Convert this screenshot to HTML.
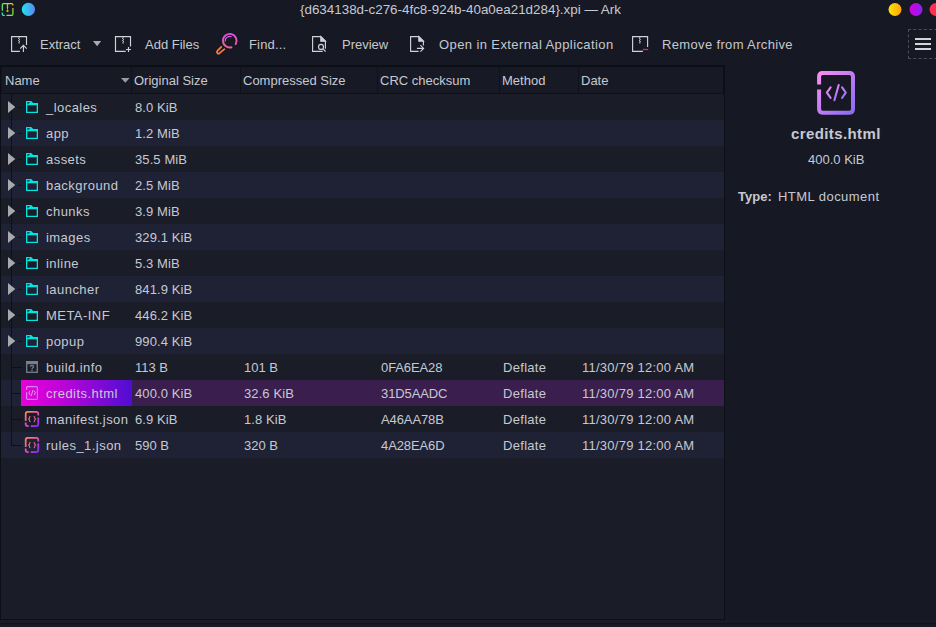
<!DOCTYPE html>
<html><head><meta charset="utf-8">
<style>
*{margin:0;padding:0;box-sizing:border-box}
html,body{width:936px;height:627px;overflow:hidden;background:#161923;font-family:"Liberation Sans",sans-serif;font-size:13px;color:#c6c9d2}
.a{position:absolute;white-space:pre;line-height:16px}
#tbl{position:absolute;left:0;top:65px;width:725px;height:555px;background:#1a1d28;border:1px solid #0d0f16}
.hdr{position:absolute;left:0;top:0;width:723px;height:28px;background:#171a25;border-bottom:1px solid #0e1016}
.hs{position:absolute;top:0;width:1px;height:27px;background:#10121a}
.hdr .a{top:7px}
.tb{top:37px;color:#c5c8d0}
.tri{z-index:3}
.row{position:absolute;left:0;width:723px;height:26px}
.row.l{background:#1f2234}
.row .a{top:6px}
svg{position:absolute;overflow:visible}
</style></head><body>
<!-- title bar -->
<div class="a" style="left:300px;top:2px;font-size:13.4px;color:#c6c9d2">{d634138d-c276-4fc8-924b-40a0ea21d284}.xpi — Ark</div>
<svg style="left:0;top:0" width="20" height="20" fill="none" stroke-width="1.2">
 <defs><linearGradient id="gz" x1="1" y1="0" x2="0" y2="1"><stop offset="0" stop-color="#f8c030"/><stop offset="0.5" stop-color="#70f040"/><stop offset="1" stop-color="#50e0d0"/></linearGradient></defs>
 <path d="M2.3 10.7V4.8Q2.3 3.6 3.5 3.6H11.7Q12.9 3.6 12.9 4.8V5.5M12.9 8.1V14.2Q12.9 15.4 11.7 15.4H6.4M4.7 15.4H3.5Q2.3 15.4 2.3 14.2V12.4" stroke="url(#gz)"/>
 <path d="M7.5 3.6V9.6M6.7 5.3L7.5 5.9L8.3 5.3M6.7 7.3L7.5 7.9L8.3 7.3" stroke="#6cf050" stroke-width="0.9"/>
 <circle cx="7.5" cy="11" r="1.15" fill="#d0a420"/>
</svg>
<svg style="left:21px;top:3px" width="16" height="16"><defs><linearGradient id="gb" x1="0" x2="1"><stop offset="0" stop-color="#20e4f0"/><stop offset="1" stop-color="#5a88f4"/></linearGradient></defs><circle cx="7.4" cy="6.4" r="6.6" fill="url(#gb)"/></svg>
<svg style="left:887.5px;top:3px" width="14" height="14"><defs><linearGradient id="gy" x1="0" x2="1"><stop offset="0" stop-color="#ffe600"/><stop offset="1" stop-color="#ffa010"/></linearGradient></defs><circle cx="7" cy="6.5" r="6.5" fill="url(#gy)"/></svg>
<svg style="left:908.5px;top:3px" width="14" height="14"><defs><linearGradient id="gp" x1="0" x2="1"><stop offset="0" stop-color="#d400e0"/><stop offset="1" stop-color="#8a20f0"/></linearGradient></defs><circle cx="7" cy="6.5" r="6.5" fill="url(#gp)"/></svg>
<svg style="left:929px;top:3px" width="14" height="14"><circle cx="7" cy="6.5" r="6.5" fill="#ff3050"/></svg>

<!-- toolbar -->
<div id="toolbar">
<svg style="left:8px;top:33px" width="22" height="22" fill="none" stroke="#cfd1d8" stroke-width="1.15">
 <path d="M11.9 18.3H3.6V3.6H18.5V11.9"/><path d="M15.4 19V12.6M12.2 15.6L15.4 12.4L18.7 15.6"/>
 <path d="M11.2 3.6V4.8L10.4 5.4L11.8 6.4L10.4 7.4L11.8 8.4L10.6 9" stroke-width="1"/><path d="M10.2 9.5H12.1A0.95 1.1 0 0 1 10.2 9.5Z" fill="#cfd1d8" stroke="none"/>
</svg>
<div class="a tb" style="left:40px">Extract</div>
<svg style="left:93px;top:41px" width="9" height="6"><path d="M0 0H8.2L4.1 5.2Z" fill="#a8aab2"/></svg>
<svg style="left:112px;top:33px" width="22" height="22" fill="none" stroke="#cfd1d8" stroke-width="1.15">
 <path d="M13.7 18.3H3.5V3.6H18.5V13.5"/><path d="M16.5 14V19M14 16.5H19"/>
 <path d="M11.2 3.6V4.8L10.4 5.4L11.8 6.4L10.4 7.4L11.8 8.4L10.6 9" stroke-width="1"/><path d="M10.2 9.5H12.1A0.95 1.1 0 0 1 10.2 9.5Z" fill="#cfd1d8" stroke="none"/>
</svg>
<div class="a tb" style="left:145px">Add Files</div>
<svg style="left:212px;top:28px" width="30" height="30" fill="none" stroke-width="1.9" stroke-linecap="round">
 <defs><linearGradient id="gf" x1="0" y1="0" x2="0" y2="1"><stop offset="0" stop-color="#e050e0"/><stop offset="1" stop-color="#f0609a"/></linearGradient></defs>
 <path d="M19.5 19.3A6.8 6.8 0 1 1 23.7 16.1" stroke="url(#gf)"/>
 <path d="M13.2 12.9A4.5 4.5 0 0 1 19.2 8.7" stroke="#dc58dc" stroke-width="1.2"/>
 <path d="M9.3 18.9L5.4 22.9A1.5 1.5 0 0 0 7.6 25.1L12.4 21.2" stroke="#ff7e3a" stroke-width="1.7"/>
</svg>
<div class="a tb" style="left:249px;letter-spacing:0.15px">Find...</div>
<svg style="left:308px;top:33px" width="22" height="22" fill="none" stroke="#cfd1d8" stroke-width="1.15">
 <path d="M14.7 18.3H4.6V3.6H12.8L17.4 8.2V15.8"/><path d="M12.8 3.6V8.2H17.4Z" fill="#cfd1d8"/>
 <circle cx="13" cy="13.9" r="2.5"/><path d="M14.9 15.9L17.6 18.5"/>
</svg>
<div class="a tb" style="left:342px">Preview</div>
<svg style="left:406px;top:33px" width="22" height="22" fill="none" stroke="#cfd1d8" stroke-width="1.15">
 <path d="M12.6 18.3H4.6V3.6H12.8L17.4 8.2V12.6"/><path d="M12.8 3.6V8.2H17.4Z" fill="#cfd1d8"/>
 <path d="M10.9 15.4H17.5M14.4 12.2L17.6 15.4L14.4 18.6"/>
</svg>
<div class="a tb" style="left:439px;letter-spacing:0.4px">Open in External Application</div>
<svg style="left:628px;top:33px" width="22" height="22" fill="none" stroke="#cfd1d8" stroke-width="1.15">
 <path d="M14.9 18.3H4.6V3.6H19.6V13.9"/><path d="M14.9 16.5H20.2" stroke="#f0204c" stroke-width="1.3"/>
 <path d="M11.9 3.6V4.8L11.1 5.4L12.5 6.4L11.1 7.4L12.5 8.4L11.3 9" stroke-width="1"/><path d="M10.9 9.5H12.8A0.95 1.1 0 0 1 10.9 9.5Z" fill="#cfd1d8" stroke="none"/>
</svg>
<div class="a tb" style="left:662px;letter-spacing:0.35px">Remove from Archive</div>
<div style="position:absolute;left:908px;top:29px;width:40px;height:30px;border:1px dashed #4a4d58"></div>
<div style="position:absolute;left:915px;top:38px;width:16px;height:2px;background:#d2d4dc"></div>
<div style="position:absolute;left:915px;top:43px;width:16px;height:2px;background:#d2d4dc"></div>
<div style="position:absolute;left:915px;top:48px;width:16px;height:2px;background:#d2d4dc"></div>
</div>

<!-- table -->
<div id="tbl">
 <div class="hdr">
  <div style="position:absolute;left:0;top:0;width:723px;height:1px;background:#0d0f16"></div>
  <div style="position:absolute;left:722px;top:0;width:1px;height:28px;background:#0d0f16"></div>
  <div style="position:absolute;left:0;top:0;width:1px;height:28px;background:#12141c"></div>
  <div class="a" style="left:4px;">Name</div>
  <svg style="left:120px;top:12px" width="10" height="6"><path d="M0 0H8.6L4.3 4.8Z" fill="#9a9ca4"/></svg>
  <div class="hs" style="left:130px"></div>
  <div class="a" style="left:133px;">Original Size</div>
  <div class="hs" style="left:239px"></div>
  <div class="a" style="left:242px;">Compressed Size</div>
  <div class="hs" style="left:376px"></div>
  <div class="a" style="left:379px;">CRC checksum</div>
  <div class="hs" style="left:498px"></div>
  <div class="a" style="left:501px;">Method</div>
  <div class="hs" style="left:577px"></div>
  <div class="a" style="left:580px;">Date</div>
 </div>
 <div class="row" style="top:28px"><svg style="left:7px;top:7px;z-index:3" width="8" height="12"><path d="M0 0L7.3 6L0 12Z" fill="#a9a9ad"/></svg><div style="position:absolute;left:17px;top:13px;width:4px;height:1px;background:#10121a"></div><svg style="left:25px;top:7px" width="12" height="12" viewBox="0 0 12 12"><path d="M0 0H5.2L7.2 2H12V4.3H0Z" fill="#00e5e0"/><path d="M1.3 1.3H4.2L1.3 3.6Z" fill="#1b1e2a"/><path d="M0.65 2.5V11.35H11.35V2.5" fill="none" stroke="#00e5e0" stroke-width="1.3"/></svg><div class="a" style="left:45px;letter-spacing:0.45px">_locales</div><div class="a" style="left:134px;letter-spacing:0.1px">8.0 KiB</div></div>
<div class="row l" style="top:54px"><svg style="left:7px;top:7px;z-index:3" width="8" height="12"><path d="M0 0L7.3 6L0 12Z" fill="#a9a9ad"/></svg><div style="position:absolute;left:17px;top:13px;width:4px;height:1px;background:#10121a"></div><svg style="left:25px;top:7px" width="12" height="12" viewBox="0 0 12 12"><path d="M0 0H5.2L7.2 2H12V4.3H0Z" fill="#00e5e0"/><path d="M1.3 1.3H4.2L1.3 3.6Z" fill="#1b1e2a"/><path d="M0.65 2.5V11.35H11.35V2.5" fill="none" stroke="#00e5e0" stroke-width="1.3"/></svg><div class="a" style="left:45px;letter-spacing:0.45px">app</div><div class="a" style="left:134px;letter-spacing:0.1px">1.2 MiB</div></div>
<div class="row" style="top:80px"><svg style="left:7px;top:7px;z-index:3" width="8" height="12"><path d="M0 0L7.3 6L0 12Z" fill="#a9a9ad"/></svg><div style="position:absolute;left:17px;top:13px;width:4px;height:1px;background:#10121a"></div><svg style="left:25px;top:7px" width="12" height="12" viewBox="0 0 12 12"><path d="M0 0H5.2L7.2 2H12V4.3H0Z" fill="#00e5e0"/><path d="M1.3 1.3H4.2L1.3 3.6Z" fill="#1b1e2a"/><path d="M0.65 2.5V11.35H11.35V2.5" fill="none" stroke="#00e5e0" stroke-width="1.3"/></svg><div class="a" style="left:45px;letter-spacing:0.45px">assets</div><div class="a" style="left:134px;letter-spacing:0.1px">35.5 MiB</div></div>
<div class="row l" style="top:106px"><svg style="left:7px;top:7px;z-index:3" width="8" height="12"><path d="M0 0L7.3 6L0 12Z" fill="#a9a9ad"/></svg><div style="position:absolute;left:17px;top:13px;width:4px;height:1px;background:#10121a"></div><svg style="left:25px;top:7px" width="12" height="12" viewBox="0 0 12 12"><path d="M0 0H5.2L7.2 2H12V4.3H0Z" fill="#00e5e0"/><path d="M1.3 1.3H4.2L1.3 3.6Z" fill="#1b1e2a"/><path d="M0.65 2.5V11.35H11.35V2.5" fill="none" stroke="#00e5e0" stroke-width="1.3"/></svg><div class="a" style="left:45px;letter-spacing:0.45px">background</div><div class="a" style="left:134px;letter-spacing:0.1px">2.5 MiB</div></div>
<div class="row" style="top:132px"><svg style="left:7px;top:7px;z-index:3" width="8" height="12"><path d="M0 0L7.3 6L0 12Z" fill="#a9a9ad"/></svg><div style="position:absolute;left:17px;top:13px;width:4px;height:1px;background:#10121a"></div><svg style="left:25px;top:7px" width="12" height="12" viewBox="0 0 12 12"><path d="M0 0H5.2L7.2 2H12V4.3H0Z" fill="#00e5e0"/><path d="M1.3 1.3H4.2L1.3 3.6Z" fill="#1b1e2a"/><path d="M0.65 2.5V11.35H11.35V2.5" fill="none" stroke="#00e5e0" stroke-width="1.3"/></svg><div class="a" style="left:45px;letter-spacing:0.45px">chunks</div><div class="a" style="left:134px;letter-spacing:0.1px">3.9 MiB</div></div>
<div class="row l" style="top:158px"><svg style="left:7px;top:7px;z-index:3" width="8" height="12"><path d="M0 0L7.3 6L0 12Z" fill="#a9a9ad"/></svg><div style="position:absolute;left:17px;top:13px;width:4px;height:1px;background:#10121a"></div><svg style="left:25px;top:7px" width="12" height="12" viewBox="0 0 12 12"><path d="M0 0H5.2L7.2 2H12V4.3H0Z" fill="#00e5e0"/><path d="M1.3 1.3H4.2L1.3 3.6Z" fill="#1b1e2a"/><path d="M0.65 2.5V11.35H11.35V2.5" fill="none" stroke="#00e5e0" stroke-width="1.3"/></svg><div class="a" style="left:45px;letter-spacing:0.45px">images</div><div class="a" style="left:134px;letter-spacing:0.1px">329.1 KiB</div></div>
<div class="row" style="top:184px"><svg style="left:7px;top:7px;z-index:3" width="8" height="12"><path d="M0 0L7.3 6L0 12Z" fill="#a9a9ad"/></svg><div style="position:absolute;left:17px;top:13px;width:4px;height:1px;background:#10121a"></div><svg style="left:25px;top:7px" width="12" height="12" viewBox="0 0 12 12"><path d="M0 0H5.2L7.2 2H12V4.3H0Z" fill="#00e5e0"/><path d="M1.3 1.3H4.2L1.3 3.6Z" fill="#1b1e2a"/><path d="M0.65 2.5V11.35H11.35V2.5" fill="none" stroke="#00e5e0" stroke-width="1.3"/></svg><div class="a" style="left:45px;letter-spacing:0.45px">inline</div><div class="a" style="left:134px;letter-spacing:0.1px">5.3 MiB</div></div>
<div class="row l" style="top:210px"><svg style="left:7px;top:7px;z-index:3" width="8" height="12"><path d="M0 0L7.3 6L0 12Z" fill="#a9a9ad"/></svg><div style="position:absolute;left:17px;top:13px;width:4px;height:1px;background:#10121a"></div><svg style="left:25px;top:7px" width="12" height="12" viewBox="0 0 12 12"><path d="M0 0H5.2L7.2 2H12V4.3H0Z" fill="#00e5e0"/><path d="M1.3 1.3H4.2L1.3 3.6Z" fill="#1b1e2a"/><path d="M0.65 2.5V11.35H11.35V2.5" fill="none" stroke="#00e5e0" stroke-width="1.3"/></svg><div class="a" style="left:45px;letter-spacing:0.45px">launcher</div><div class="a" style="left:134px;letter-spacing:0.1px">841.9 KiB</div></div>
<div class="row" style="top:236px"><svg style="left:7px;top:7px;z-index:3" width="8" height="12"><path d="M0 0L7.3 6L0 12Z" fill="#a9a9ad"/></svg><div style="position:absolute;left:17px;top:13px;width:4px;height:1px;background:#10121a"></div><svg style="left:25px;top:7px" width="12" height="12" viewBox="0 0 12 12"><path d="M0 0H5.2L7.2 2H12V4.3H0Z" fill="#00e5e0"/><path d="M1.3 1.3H4.2L1.3 3.6Z" fill="#1b1e2a"/><path d="M0.65 2.5V11.35H11.35V2.5" fill="none" stroke="#00e5e0" stroke-width="1.3"/></svg><div class="a" style="left:45px;letter-spacing:0.45px">META-INF</div><div class="a" style="left:134px;letter-spacing:0.1px">446.2 KiB</div></div>
<div class="row l" style="top:262px"><svg style="left:7px;top:7px;z-index:3" width="8" height="12"><path d="M0 0L7.3 6L0 12Z" fill="#a9a9ad"/></svg><div style="position:absolute;left:17px;top:13px;width:4px;height:1px;background:#10121a"></div><svg style="left:25px;top:7px" width="12" height="12" viewBox="0 0 12 12"><path d="M0 0H5.2L7.2 2H12V4.3H0Z" fill="#00e5e0"/><path d="M1.3 1.3H4.2L1.3 3.6Z" fill="#1b1e2a"/><path d="M0.65 2.5V11.35H11.35V2.5" fill="none" stroke="#00e5e0" stroke-width="1.3"/></svg><div class="a" style="left:45px;letter-spacing:0.45px">popup</div><div class="a" style="left:134px;letter-spacing:0.1px">990.4 KiB</div></div>
<div class="row" style="top:288px"><div style="position:absolute;left:10px;top:13px;width:11px;height:1px;background:#0e1016"></div><svg style="left:25px;top:7px" width="12" height="12" viewBox="0 0 12 12"><rect x="0.7" y="0.7" width="10.6" height="10.6" fill="none" stroke="#76808c" stroke-width="1.3"/><rect x="0" y="0" width="12" height="3.2" fill="#76808c"/><path d="M4.4 5.7Q4.4 4.3 6 4.3Q7.6 4.3 7.6 5.6Q7.6 6.5 6.7 6.9Q6 7.2 6 8.1V8.3" fill="none" stroke="#7a8490" stroke-width="1.2"/><circle cx="6" cy="9.5" r="0.75" fill="#7a8490"/></svg><div class="a" style="left:45px;letter-spacing:0.45px">build.info</div><div class="a" style="left:134px;letter-spacing:0px">113 B</div><div class="a" style="left:243px;letter-spacing:0px">101 B</div><div class="a" style="left:380px;letter-spacing:-0.1px">0FA6EA28</div><div class="a" style="left:502px;letter-spacing:0.3px">Deflate</div><div class="a" style="left:581px;letter-spacing:0.25px">11/30/79 12:00 AM</div></div>
<div class="row l" style="top:314px"><div style="position:absolute;left:20px;top:0;width:111px;height:26px;background:linear-gradient(90deg,#e800da,#c004d8 35%,#4e0ed2)"></div><div style="position:absolute;left:131px;top:0;width:592px;height:26px;background:#3a1e4e"></div><div style="position:absolute;left:10px;top:13px;width:10px;height:1px;background:#0e1016"></div><svg style="left:25px;top:6px" width="12" height="14" viewBox="0 0 12 14"><defs><linearGradient id="gh11" x1="0" y1="0" x2="1" y2="1"><stop offset="0" stop-color="#f088ec"/><stop offset="1" stop-color="#9a78ff"/></linearGradient></defs><path d="M0.6 3.7V1.6Q0.6 0.6 1.6 0.6H10.4Q11.4 0.6 11.4 1.6V12.4Q11.4 13.4 10.4 13.4H1.6Q0.6 13.4 0.6 12.4V6.2" fill="none" stroke="url(#gh11)" stroke-width="1.2"/><path d="M3.9 5L2.9 6.9L3.9 8.8M8.3 5.1L9.4 6.8L8.4 8.8M6.9 4.3L5.3 9.7" fill="none" stroke="#e8a0f0" stroke-width="0.95" stroke-linecap="round"/></svg><div class="a" style="left:45px;letter-spacing:0.45px">credits.html</div><div class="a" style="left:134px;letter-spacing:0.1px">400.0 KiB</div><div class="a" style="left:243px;letter-spacing:0.1px">32.6 KiB</div><div class="a" style="left:380px;letter-spacing:-0.1px">31D5AADC</div><div class="a" style="left:502px;letter-spacing:0.3px">Deflate</div><div class="a" style="left:581px;letter-spacing:0.25px">11/30/79 12:00 AM</div></div>
<div class="row" style="top:340px"><div style="position:absolute;left:10px;top:13px;width:11px;height:1px;background:#0e1016"></div><svg style="left:21px;top:2px" width="20" height="22" fill="none"><defs><linearGradient id="gj12" gradientUnits="userSpaceOnUse" x1="3" y1="3" x2="17" y2="19"><stop offset="0" stop-color="#ff9250"/><stop offset="0.5" stop-color="#e050b8"/><stop offset="1" stop-color="#7428ff"/></linearGradient><linearGradient id="gk12" gradientUnits="userSpaceOnUse" x1="6" y1="8" x2="14" y2="14"><stop offset="0" stop-color="#f07a50"/><stop offset="1" stop-color="#e050c8"/></linearGradient></defs><path d="M3.7 13V5.9Q3.7 3.86 5.7 3.86H14.3Q16.3 3.86 16.3 5.9V7.5M16.3 9.5V16.1Q16.3 18.1 14.3 18.1H8.8M6.8 18.1H5.7Q3.7 18.1 3.7 16.1V14.4" stroke="url(#gj12)" stroke-width="1.75"/><path d="M8.5 8.4Q7.5 8.4 7.5 9.3V10.3L6.5 11.1L7.5 11.9V12.9Q7.5 13.8 8.5 13.8M11.7 8.4Q12.7 8.4 12.7 9.3V10.3L13.7 11.1L12.7 11.9V12.9Q12.7 13.8 11.7 13.8" stroke="url(#gk12)" stroke-width="1.05"/></svg><div class="a" style="left:45px;letter-spacing:0.45px">manifest.json</div><div class="a" style="left:134px;letter-spacing:0.1px">6.9 KiB</div><div class="a" style="left:243px;letter-spacing:0.1px">1.8 KiB</div><div class="a" style="left:380px;letter-spacing:-0.1px">A46AA78B</div><div class="a" style="left:502px;letter-spacing:0.3px">Deflate</div><div class="a" style="left:581px;letter-spacing:0.25px">11/30/79 12:00 AM</div></div>
<div class="row l" style="top:366px"><div style="position:absolute;left:10px;top:13px;width:11px;height:1px;background:#0e1016"></div><svg style="left:21px;top:2px" width="20" height="22" fill="none"><defs><linearGradient id="gj13" gradientUnits="userSpaceOnUse" x1="3" y1="3" x2="17" y2="19"><stop offset="0" stop-color="#ff9250"/><stop offset="0.5" stop-color="#e050b8"/><stop offset="1" stop-color="#7428ff"/></linearGradient><linearGradient id="gk13" gradientUnits="userSpaceOnUse" x1="6" y1="8" x2="14" y2="14"><stop offset="0" stop-color="#f07a50"/><stop offset="1" stop-color="#e050c8"/></linearGradient></defs><path d="M3.7 13V5.9Q3.7 3.86 5.7 3.86H14.3Q16.3 3.86 16.3 5.9V7.5M16.3 9.5V16.1Q16.3 18.1 14.3 18.1H8.8M6.8 18.1H5.7Q3.7 18.1 3.7 16.1V14.4" stroke="url(#gj13)" stroke-width="1.75"/><path d="M8.5 8.4Q7.5 8.4 7.5 9.3V10.3L6.5 11.1L7.5 11.9V12.9Q7.5 13.8 8.5 13.8M11.7 8.4Q12.7 8.4 12.7 9.3V10.3L13.7 11.1L12.7 11.9V12.9Q12.7 13.8 11.7 13.8" stroke="url(#gk13)" stroke-width="1.05"/></svg><div class="a" style="left:45px;letter-spacing:0.45px">rules_1.json</div><div class="a" style="left:134px;letter-spacing:0px">590 B</div><div class="a" style="left:243px;letter-spacing:0px">320 B</div><div class="a" style="left:380px;letter-spacing:-0.1px">4A28EA6D</div><div class="a" style="left:502px;letter-spacing:0.3px">Deflate</div><div class="a" style="left:581px;letter-spacing:0.25px">11/30/79 12:00 AM</div></div>
<div style="position:absolute;z-index:2;left:10px;top:28px;width:1px;height:351px;background:#0e1016"></div>
</div>

<!-- right panel -->
<div id="panel">
<svg style="left:810px;top:64px" width="52" height="56" fill="none">
 <defs><linearGradient id="gph" x1="0" y1="0" x2="1" y2="1"><stop offset="0" stop-color="#f88cf4"/><stop offset="1" stop-color="#8a6cf6"/></linearGradient></defs>
 <path d="M9.1 20.6V12.5Q9.1 8.9 12.7 8.9H39.4Q43 8.9 43 12.5V45.1Q43 48.7 39.4 48.7H12.7Q9.1 48.7 9.1 45.1V25.5" stroke="url(#gph)" stroke-width="4"/>
 <path d="M20.6 23.4L16.9 28.6L20.6 33.8M32.1 23.4L35.8 28.6L32.1 33.8M28.7 21L24.4 36.2" stroke="url(#gph)" stroke-width="2.1" stroke-linecap="round" stroke-linejoin="round"/>
</svg>
<div class="a" style="left:791px;top:126px;font-weight:bold;font-size:15px;letter-spacing:0.4px">credits.html</div>
<div class="a" style="left:808px;top:152px">400.0 KiB</div>
<div class="a" style="left:738px;top:189px;font-weight:bold">Type:</div>
<div class="a" style="left:778px;top:189px;letter-spacing:0.45px">HTML document</div>
</div>
<div style="position:absolute;left:0;top:620px;width:936px;height:3px;background:#181b26"></div>
<div style="position:absolute;left:0;top:623px;width:936px;height:1px;background:#11131b"></div>
</body></html>
